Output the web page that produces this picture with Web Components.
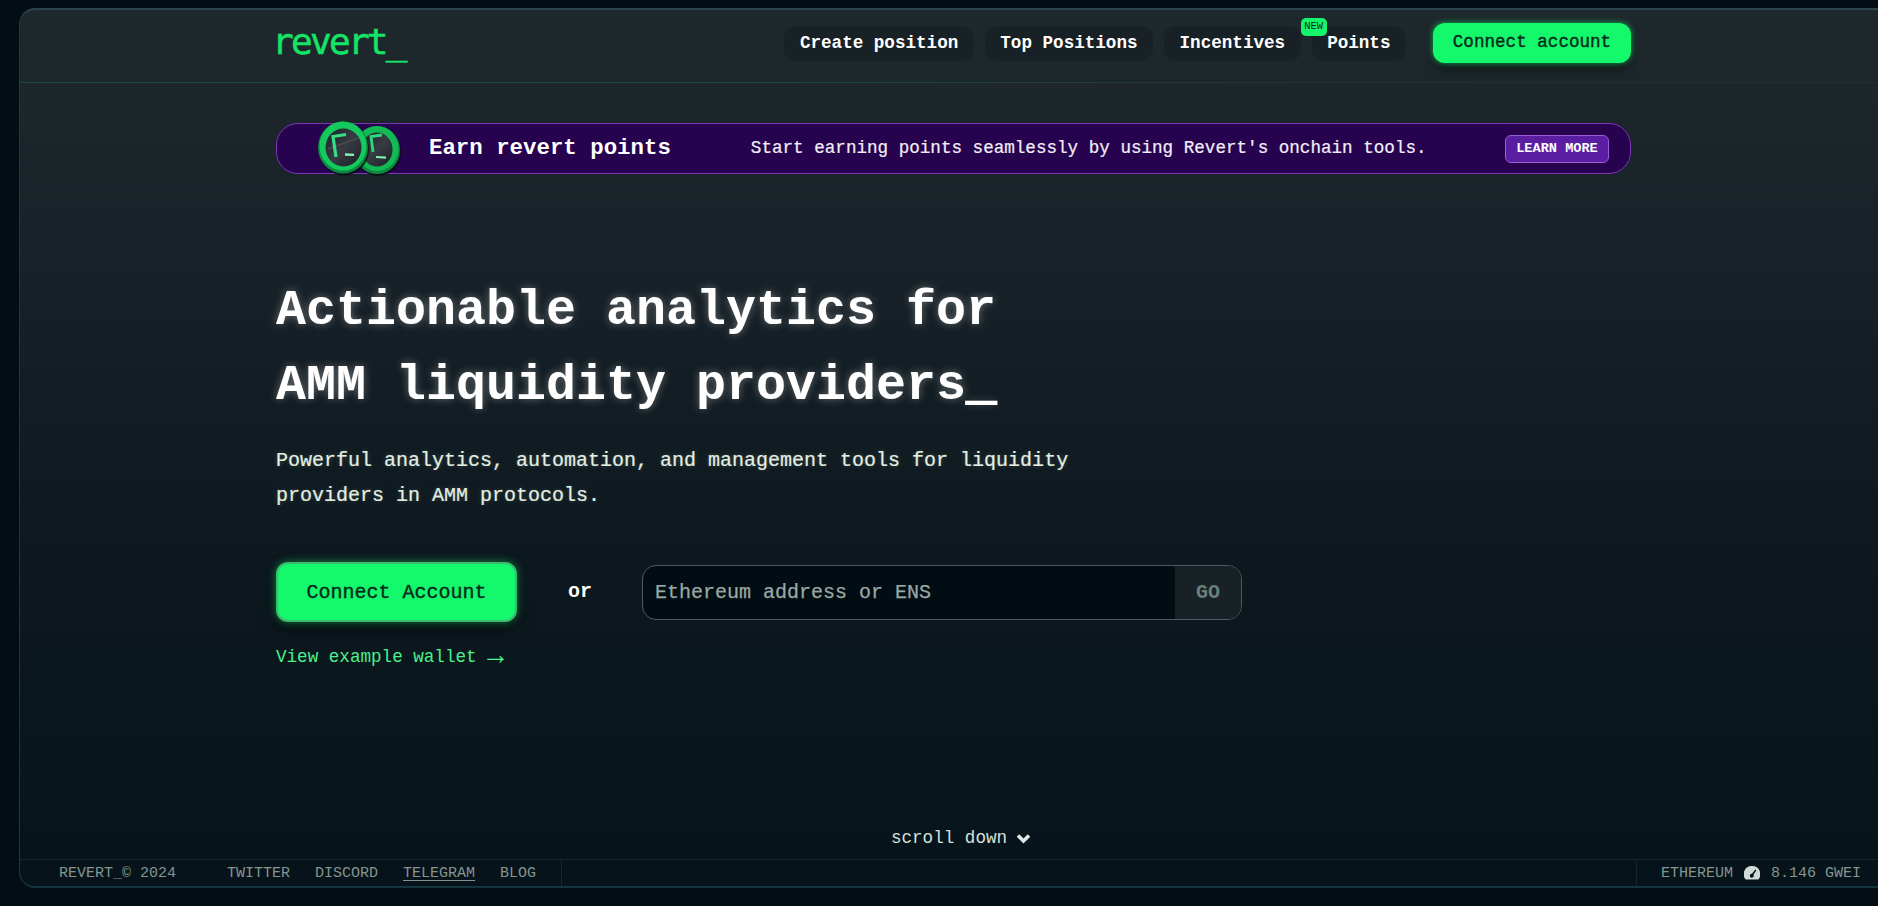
<!DOCTYPE html>
<html>
<head>
<meta charset="utf-8">
<title>revert</title>
<style>
html,body{margin:0;height:100%;overflow:hidden;background:#020d14;}
body{font-family:"Liberation Mono",monospace;}
</style>
</head>
<body>
<rv-shell>
  <rv-header slot="top">
    <rv-pill>Create position</rv-pill>
    <rv-pill>Top Positions</rv-pill>
    <rv-pill>Incentives</rv-pill>
    <rv-pill new>Points</rv-pill>
    <rv-button slot="cta" small>Connect account</rv-button>
  </rv-header>
  <rv-banner></rv-banner>
  <rv-hero></rv-hero>
  <rv-scroll></rv-scroll>
  <rv-footer slot="bottom"></rv-footer>
</rv-shell>
<script>
class RvShell extends HTMLElement{
  constructor(){
    super();
    this.attachShadow({mode:'open'});
    this.shadowRoot.innerHTML=`
    <style>
      :host{display:flex;flex-direction:column;box-sizing:border-box;height:880px;margin:8px -20px 0 19px;
        border:1px solid #22363e;border-top:2px solid #2b444e;border-bottom:2px solid #143440;border-radius:16px;
        background:linear-gradient(180deg,#1f282d 0%,#172127 30%,#0d191f 62%,#06131a 100%);color:#fff;overflow:hidden;}
      main{flex:1;display:flex;flex-direction:column;padding:0 266px 0 256px;min-height:0;}
    </style>
    <slot name="top"></slot>
    <main><slot></slot></main>
    <slot name="bottom"></slot>`;
  }
}
customElements.define('rv-shell',RvShell);

class RvHeader extends HTMLElement{
  constructor(){
    super();
    this.attachShadow({mode:'open'});
    this.shadowRoot.innerHTML=`
    <style>
      :host{display:flex;align-items:center;justify-content:space-between;box-sizing:border-box;height:73px;padding:0 266px 6px 256px;
        border-bottom:1px solid;border-image:linear-gradient(90deg,#1c4a3a 0%,#1c4a3a 40%,#222e33 80%,#222e33 100%) 1;}
      .logo{font-family:"DejaVu Sans Mono",monospace;font-size:36px;letter-spacing:-2.7px;color:#14e567;line-height:1;margin:-3px 0 0 -4px;
        -webkit-text-stroke:.5px #14e567;}
      nav{display:flex;align-items:center;gap:11px;}
      .cta{margin-left:16px;display:flex;}
    </style>
    <div class="logo">revert_</div>
    <nav><slot></slot><div class="cta"><slot name="cta"></slot></div></nav>`;
  }
}
customElements.define('rv-header',RvHeader);

class RvPill extends HTMLElement{
  constructor(){
    super();
    this.attachShadow({mode:'open'});
    this.shadowRoot.innerHTML=`
    <style>
      :host{display:block;position:relative;box-sizing:border-box;height:35px;line-height:34px;padding:0 15.5px;
        border-radius:12px;background:#182226;color:#fff;font-size:17.6px;font-weight:700;white-space:nowrap;}
      .new{position:absolute;left:-11px;top:-8px;width:26px;height:18px;border-radius:5px;background:#14f56b;color:#06301c;
        font-size:10.5px;font-weight:400;line-height:17px;text-align:center;}
    </style>
    ${this.hasAttribute('new')?'<span class="new">NEW</span>':''}
    <slot></slot>`;
  }
}
customElements.define('rv-pill',RvPill);

class RvButton extends HTMLElement{
  constructor(){
    super();
    this.attachShadow({mode:'open'});
    const small=this.hasAttribute('small');
    this.shadowRoot.innerHTML=`
    <style>
      :host{display:block;box-sizing:border-box;background:#14f86b;color:#052a1c;white-space:nowrap;text-align:center;
        -webkit-text-stroke:.35px #052a1c;
        ${small?`width:198px;height:40px;line-height:39px;font-size:17.6px;border-radius:12px;
          box-shadow:0 0 6px #12b656,0 6px 10px rgba(0,0,0,.5);`
        :`width:241px;height:60px;line-height:58px;font-size:20px;border-radius:12px;border:2px solid #3fb873;
          box-shadow:0 0 9px rgba(20,220,100,.55),0 6px 14px rgba(0,0,0,.5);`}}
    </style>
    <slot></slot>`;
  }
}
customElements.define('rv-button',RvButton);

class RvCoins extends HTMLElement{
  constructor(){
    super();
    this.attachShadow({mode:'open'});
    this.shadowRoot.innerHTML=`
    <style>:host{display:block;width:88px;height:56px;} svg{display:block;}</style>
    <svg width="88" height="56" viewBox="0 0 88 56">
      <defs>
        <linearGradient id="face" x1="0" y1="0" x2="1" y2="1">
          <stop offset="0" stop-color="#1d2226"/><stop offset=".5" stop-color="#363c42"/><stop offset="1" stop-color="#1a1f23"/>
        </linearGradient>
      </defs>
      <g>
        <ellipse cx="62" cy="31" rx="23" ry="24" fill="#04100b" opacity=".8"/>
        <ellipse cx="61" cy="29" rx="23" ry="24" fill="#0c8a40"/>
        <ellipse cx="61" cy="27.5" rx="21.5" ry="22.5" fill="#12b955"/>
        <ellipse cx="61" cy="28.5" rx="15.5" ry="17" fill="url(#face)"/>
        <path d="M57 31L55 15.5l11-1.5" fill="none" stroke="#2bd97a" stroke-width="2.8"/>
        <path d="M60 36l10 .6" stroke="#7ef0ad" stroke-width="2.2"/>
      </g>
      <g>
        <ellipse cx="28" cy="28.5" rx="25" ry="26" fill="#04100b" opacity=".8"/>
        <ellipse cx="27" cy="26.5" rx="25" ry="26" fill="#0c8a40"/>
        <ellipse cx="27" cy="25" rx="23.5" ry="24.5" fill="#14c95e"/>
        <ellipse cx="27.5" cy="26.5" rx="18" ry="19" fill="url(#face)"/>
        <path d="M12 28l30-11" stroke="#454b51" stroke-width="1.6"/>
        <path d="M20 36L17 15.5l13-2" fill="none" stroke="#35dd84" stroke-width="3.2"/>
        <path d="M29 33.5l9 .4" stroke="#8df2b7" stroke-width="2.4"/>
      </g>
    </svg>`;
  }
}
customElements.define('rv-coins',RvCoins);

class RvBanner extends HTMLElement{
  constructor(){
    super();
    this.attachShadow({mode:'open'});
    this.shadowRoot.innerHTML=`
    <style>
      :host{display:flex;align-items:center;box-sizing:border-box;height:51px;margin-top:40px;padding:0 21px 0 39px;
        border:1px solid #7a35b5;border-radius:22px;background:#27024f;color:#fff;}
      h2{margin:0 0 0 25px;font-size:22.4px;font-weight:700;line-height:1;white-space:nowrap;}
      p{margin:0 0 0 80px;flex:1;font-size:17.6px;line-height:1;white-space:nowrap;color:#f2eef7;-webkit-text-stroke:.2px #f2eef7;}
      a{box-sizing:border-box;width:104px;height:28px;line-height:26px;text-align:center;border:1px solid #9a5fd6;border-radius:6px;
        background:#5a1ea3;font-size:13.6px;font-weight:700;}
    </style>
    <rv-coins></rv-coins>
    <h2>Earn revert points</h2>
    <p>Start earning points seamlessly by using Revert's onchain tools.</p>
    <a>LEARN MORE</a>`;
  }
}
customElements.define('rv-banner',RvBanner);

class RvSearch extends HTMLElement{
  constructor(){
    super();
    this.attachShadow({mode:'open'});
    this.shadowRoot.innerHTML=`
    <style>
      :host{display:flex;box-sizing:border-box;width:600px;height:55px;border:1px solid #4c5a61;border-radius:14px;background:#020d13;
        overflow:hidden;font-size:20px;line-height:53px;}
      .ph{flex:1;padding-left:12px;color:#9aa8a5;-webkit-text-stroke:.25px #9aa8a5;}
      .go{width:66px;text-align:center;background:#182226;color:#6b7f7c;font-weight:700;}
    </style>
    <span class="ph">Ethereum address or ENS</span>
    <span class="go">GO</span>`;
  }
}
customElements.define('rv-search',RvSearch);

class RvHero extends HTMLElement{
  constructor(){
    super();
    this.attachShadow({mode:'open'});
    this.shadowRoot.innerHTML=`
    <style>
      :host{display:block;padding-top:99px;}
      h1{margin:0;font-size:50px;line-height:75px;font-weight:700;color:#fff;text-shadow:0 0 8px rgba(255,255,255,.35);white-space:nowrap;}
      h1 span{-webkit-text-stroke:2px #fff;}
      p{margin:20px 0 0;font-size:20px;line-height:35px;color:#e3efe3;text-shadow:0 0 5px rgba(220,255,220,.2);-webkit-text-stroke:.2px #e3efe3;}
      .row{display:flex;align-items:center;margin-top:49px;}
      .or{margin:0 50px 0 51px;font-size:20px;font-weight:700;line-height:1;}
      a{display:block;margin-top:23px;font-size:17.6px;line-height:24px;color:#4cf08c;}
      a span{font-size:28px;line-height:0;vertical-align:-2px;}
    </style>
    <h1>Actionable analytics for<br>AMM liquidity providers<span>_</span></h1>
    <p>Powerful analytics, automation, and management tools for liquidity<br>providers in AMM protocols.</p>
    <div class="row"><rv-button>Connect Account</rv-button><span class="or">or</span><rv-search></rv-search></div>
    <a>View example wallet <span>&#8594;</span></a>`;
  }
}
customElements.define('rv-hero',RvHero);

class RvScroll extends HTMLElement{
  constructor(){
    super();
    this.attachShadow({mode:'open'});
    this.shadowRoot.innerHTML=`
    <style>
      :host{display:flex;align-items:center;justify-content:center;gap:9px;margin-top:auto;margin-bottom:9px;padding-left:15px;
        font-size:17.6px;line-height:24px;color:#d5e0dc;}
      svg{display:block;}
    </style>
    <span>scroll down</span>
    <svg width="15" height="11" viewBox="0 0 15 11"><path d="M2 2.5l5.5 5.5 5.5-5.5" fill="none" stroke="#dfe8e4" stroke-width="3.6"/></svg>`;
  }
}
customElements.define('rv-scroll',RvScroll);

class RvFooter extends HTMLElement{
  constructor(){
    super();
    this.attachShadow({mode:'open'});
    this.shadowRoot.innerHTML=`
    <style>
      :host{display:flex;justify-content:space-between;box-sizing:border-box;height:27px;border-top:1px solid #16262d;
        padding-right:20px;font-size:15px;line-height:25px;color:#83958f;white-space:nowrap;}
      .left{display:flex;align-items:center;gap:25px;padding:0 25px 0 39px;border-right:1px solid #16262d;}
      .copy{margin-right:26px;}
      u{text-underline-offset:3px;}
      .right{display:flex;align-items:center;gap:11px;padding:0 16px 0 24px;border-left:1px solid #16262d;}
      svg{display:block;}
    </style>
    <div class="left"><span class="copy">REVERT_© 2024</span><span>TWITTER</span><span>DISCORD</span><u>TELEGRAM</u><span>BLOG</span></div>
    <div class="right"><span>ETHEREUM</span>
      <svg width="16" height="14" viewBox="0 0 15 13"><path fill-rule="evenodd" fill="#cfdbd7" d="M7.5 0A7.5 7.5 0 0 0 1.6 12.5h11.8A7.5 7.5 0 0 0 7.5 0zM10.6 3.2l1 .8-2.7 4.2a1.8 1.8 0 1 1-1.4-1z"/></svg>
      <span>8.146 GWEI</span></div>`;
  }
}
customElements.define('rv-footer',RvFooter);
</script>
</body>
</html>
